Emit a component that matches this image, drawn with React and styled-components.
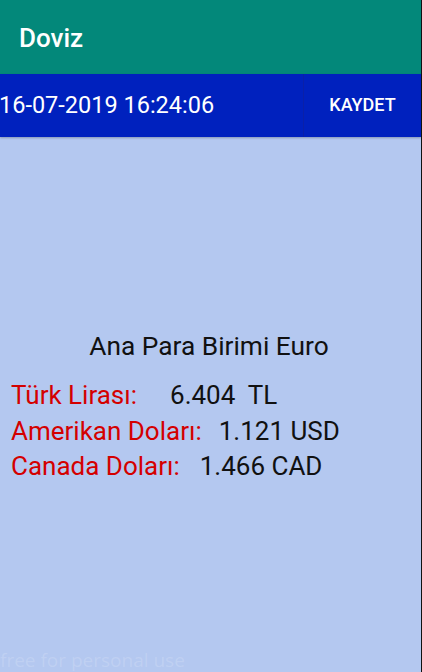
import styled, { createGlobalStyle } from "styled-components"

const Global = createGlobalStyle`
    html, body {
        margin: 0;
        padding: 0;
        background: #B4C8F0;
    }
    body {
        font-family: Roboto, "Noto Sans", sans-serif;
    }
`

const rates = [
    { label: "Türk Lirası:", value: "6.404  TL", gap: 33 },
    { label: "Amerikan Doları:", value: "1.121 USD", gap: 17 },
    { label: "Canada Doları:", value: "1.466 CAD", gap: 20 },
]

export default function App() {
    return (
        <Screen>
            <Global />
            <AppBar>
                <Title>Doviz</Title>
            </AppBar>
            <ActionBar>
                <DateText>16-07-2019 16:24:06</DateText>
                <SaveBtn>KAYDET</SaveBtn>
            </ActionBar>
            <Content>
                <Heading>Ana Para Birimi Euro</Heading>
                <Rates>
                    {rates.map((r) => (
                        <Rate key={r.label}>
                            <Label>{r.label}</Label>
                            <Value $gap={r.gap}>{r.value}</Value>
                        </Rate>
                    ))}
                </Rates>
            </Content>
            <Watermark>free for personal use</Watermark>
        </Screen>
    )
}

const Screen = styled.div`
    width: 422px;
    height: 672px;
    box-sizing: border-box;
    border-right: 1px solid #111;
    background: #B4C8F0;
    display: flex;
    flex-direction: column;
    overflow: hidden;
`

const AppBar = styled.div`
    height: 74px;
    background: #03887A;
    display: flex;
    align-items: center;
    padding-left: 19px;
    box-sizing: border-box;
`

const Title = styled.h1`
    margin: 0;
    margin-top: 2px;
    color: #fff;
    font-size: 26px;
    font-weight: 500;
`

const ActionBar = styled.div`
    height: 63px;
    background: #0021BE;
    display: flex;
    align-items: stretch;
    box-shadow: 0 1px 2px rgba(0,0,0,0.25);
`

const DateText = styled.div`
    flex: 1;
    color: #fff;
    font-size: 23.5px;
    margin-left: -1px;
    padding-bottom: 2px;
    box-sizing: border-box;
    display: flex;
    align-items: center;
    border-right: 1px solid #0A20A8;
`

const SaveBtn = styled.button`
    width: 117px;
    background: none;
    border: none;
    color: #fff;
    font-family: inherit;
    font-size: 18px;
    font-weight: 500;
    padding: 0 0 2px 0;
    cursor: pointer;
`

const Content = styled.div`
    flex: 1;
    padding-top: 193px;
    display: flex;
    flex-direction: column;
`

const Heading = styled.div`
    text-align: center;
    font-size: 26.3px;
    color: #111;
    margin-left: -3px;
    line-height: 32px;
`

const Rates = styled.div`
    margin-top: 16px;
    padding-left: 11px;
    display: flex;
    flex-direction: column;
`

const Rate = styled.div`
    display: flex;
    font-size: 26px;
    line-height: 35.5px;
`

const Label = styled.span`
    color: #D40000;
`

const Value = styled.span`
    color: #111;
    white-space: pre;
    margin-left: ${(p) => p.$gap}px;
`

const Watermark = styled.div`
    font-family: "Open Sans", sans-serif;
    font-size: 19px;
    color: rgba(255,255,255,0.16);
    line-height: 20px;
    margin-bottom: 2px;
`
